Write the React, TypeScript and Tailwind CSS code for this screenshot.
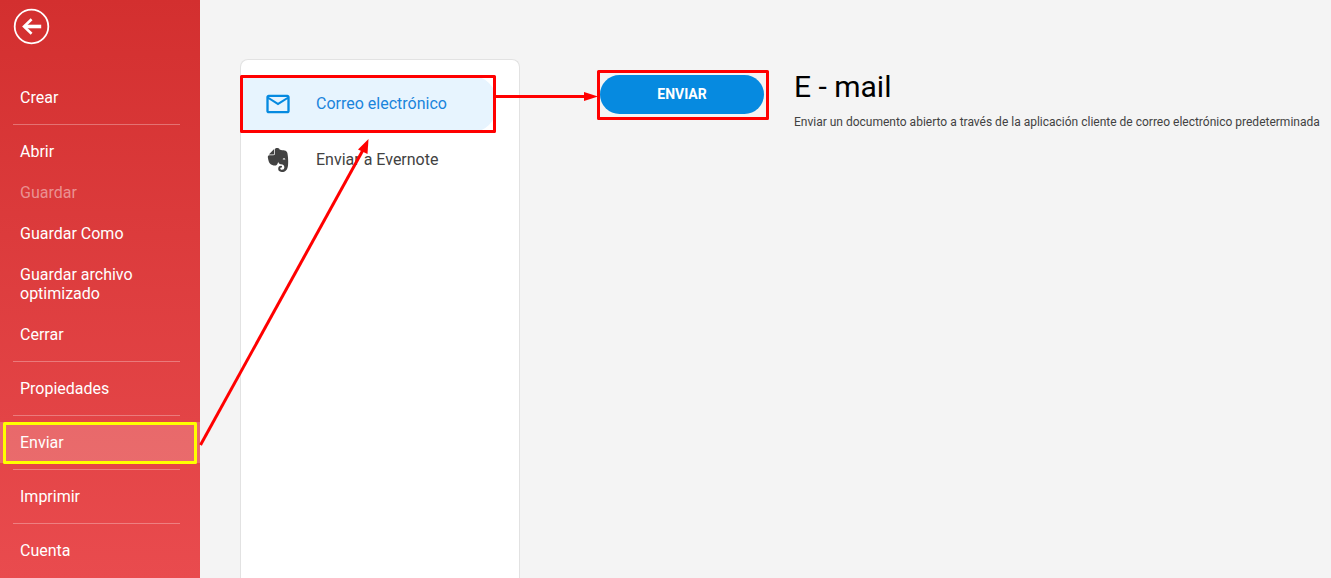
import clsx from 'clsx';
import { FC } from 'react';
import { MdMailOutline } from 'react-icons/md';
import { SiEvernote } from 'react-icons/si';

type MenuItem = {
   label: string;
   disabled?: boolean;
   active?: boolean;
};

const groups: MenuItem[][] = [
   [{ label: 'Crear' }],
   [
      { label: 'Abrir' },
      { label: 'Guardar', disabled: true },
      { label: 'Guardar Como' },
      { label: 'Guardar archivo optimizado' },
      { label: 'Cerrar' },
   ],
   [{ label: 'Propiedades' }],
   [{ label: 'Enviar', active: true }],
   [{ label: 'Imprimir' }],
   [{ label: 'Cuenta' }],
];

const Sidebar: FC = () => {
   return (
      <nav className="w-[200px] shrink-0 bg-linear-to-b from-[#d32f2f] to-[#e94b4e] text-white">
         <button aria-label="Volver" className="block ml-3 mt-2 mb-8">
            <svg width="38" height="37" viewBox="0 0 38 37" fill="none" stroke="currentColor">
               <circle cx="19.5" cy="18.5" r="16.8" strokeWidth="1.8" />
               <path d="M29.2 18.5H12.5" strokeWidth="3.6" />
               <path d="M19.6 11.2L12 18.5L19.6 25.8" strokeWidth="2.6" />
            </svg>
         </button>
         {groups.map((items, index) => (
            <div key={items[0].label}>
               {index > 0 && <hr className="my-1.5 ml-[13px] mr-5 border-white/30" />}
               {items.map((item) => (
                  <button
                     key={item.label}
                     disabled={item.disabled}
                     className={clsx(
                        'block w-full px-5 py-[11px] text-left text-base leading-[19px]',
                        item.disabled && 'text-white/45',
                        item.active && 'bg-white/20',
                     )}
                  >
                     {item.label}
                  </button>
               ))}
            </div>
         ))}
      </nav>
   );
};

const SendTargets: FC = () => {
   return (
      <div className="w-[280px] shrink-0 rounded-t-lg border border-b-0 border-[#e2e2e2] bg-white pt-4">
         <button className="flex h-14 w-[255px] items-center rounded-r-3xl bg-[#e7f4fe] pl-[23px] text-[#1a84dc]">
            <MdMailOutline size={28} className="text-[#068ae0]" />
            <span className="ml-6">Correo electrónico</span>
         </button>
         <button className="flex h-14 w-[255px] items-center pl-[23px] text-[#424242]">
            <span className="flex w-7 justify-center">
               <SiEvernote size={24} />
            </span>
            <span className="ml-6">Enviar a Evernote</span>
         </button>
      </div>
   );
};

// Walkthrough marks drawn on top of the window
const Annotations: FC = () => {
   return (
      <svg
         aria-hidden="true"
         className="pointer-events-none absolute inset-0 h-full w-full"
         fill="none"
         strokeWidth="3"
         strokeLinejoin="round"
      >
         <rect x="4.5" y="423.5" width="191" height="39" stroke="#ffff00" />
         <g stroke="#ff0000">
            <rect x="241.5" y="76.5" width="253" height="55" />
            <rect x="598.5" y="71.5" width="169" height="47" />
            <path d="M496 96.5H586" />
            <path d="M200.5 445L363 150" />
         </g>
         <g fill="#ff0000">
            <path d="M584 92L598 96.5L584 101Z" />
            <path d="M368.5 139L358 149.5L367.5 154Z" />
         </g>
      </svg>
   );
};

const App: FC = () => {
   return (
      <div className="relative flex min-h-screen bg-[#f4f4f4] font-['Roboto',sans-serif]">
         <Sidebar />
         <main className="flex flex-auto pl-10 pt-[59px]">
            <SendTargets />
            <section className="ml-20 flex flex-auto items-start pt-4">
               <button className="h-[39px] w-[164px] shrink-0 rounded-full bg-[#068ae0] pb-0.5 text-sm font-bold uppercase text-white">
                  Enviar
               </button>
               <div className="ml-[30px]">
                  <h1 className="text-3xl leading-6 text-black">E - mail</h1>
                  <p className="mt-[15px] text-xs text-[#424242]">
                     Enviar un documento abierto a través de la aplicación cliente de correo electrónico
                     predeterminada
                  </p>
               </div>
            </section>
         </main>
         <Annotations />
      </div>
   );
};

export default App;
